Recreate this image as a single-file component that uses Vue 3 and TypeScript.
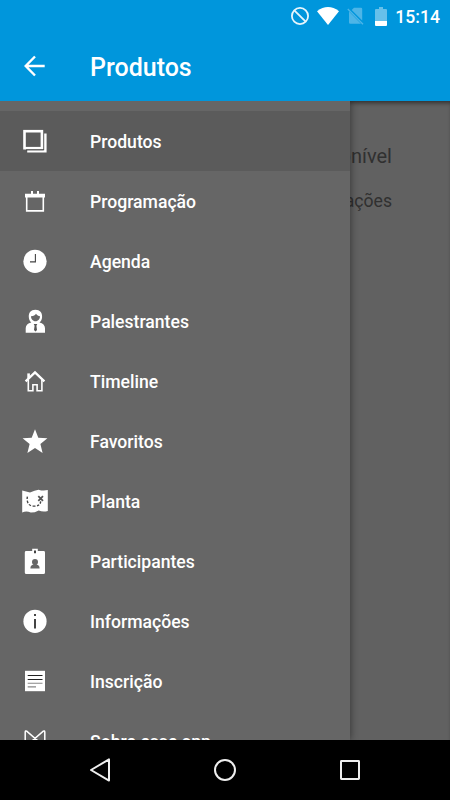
<script setup lang="ts">
import { ref } from 'vue'

interface Entry {
  id: string
  label: string
}

const entries: Entry[] = [
  { id: 'products', label: 'Produtos' },
  { id: 'schedule', label: 'Programação' },
  { id: 'agenda', label: 'Agenda' },
  { id: 'speakers', label: 'Palestrantes' },
  { id: 'timeline', label: 'Timeline' },
  { id: 'favorites', label: 'Favoritos' },
  { id: 'map', label: 'Planta' },
  { id: 'attendees', label: 'Participantes' },
  { id: 'info', label: 'Informações' },
  { id: 'signup', label: 'Inscrição' },
  { id: 'about', label: 'Sobre esse app' },
]
const active = ref('products')
</script>

<template>
  <div class="screen">
    <header class="top">
      <div class="status">
        <svg class="st-block" viewBox="0 0 20 20"><circle cx="10" cy="10" r="8.1" fill="none" stroke="#e6f5fc" stroke-width="1.8" /><path d="M4.3 4.3 15.7 15.7" stroke="#e6f5fc" stroke-width="1.8" /></svg>
        <svg class="st-wifi" viewBox="0 0 22 18"><path d="M0 4.2Q11-4 22 4.2L11 18Z" fill="#fff" /></svg>
        <svg class="st-sim" viewBox="0 0 17 18"><path d="M7 .8H14Q15.2 .8 15.2 2V13.6L4.7 3.1ZM2 4.6 14 16.8H3.2Q2 16.8 2 15.6Z" fill="#4db5e7" /><path d="M.8 2 16 17.2" stroke="#4db5e7" stroke-width="1.3" /></svg>
        <svg class="st-battery" viewBox="0 0 12 19"><path d="M4 0H8V2H11Q12 2 12 3V14H0V3Q0 2 1 2H4Z" fill="#66c0ea" /><path d="M0 14H12V18Q12 19 11 19H1Q0 19 0 18Z" fill="#fff" /></svg>
        <span class="clock">15:14</span>
      </div>
      <div class="toolbar">
        <svg class="back" viewBox="0 0 22 22"><path d="M20.7 11H2M11 1.5 1.7 11 11 20.5" fill="none" stroke="#fff" stroke-width="2.4" /></svg>
        <h1>Produtos</h1>
      </div>
    </header>

    <main class="body">
      <section class="content">
        <p class="headline">disponível</p>
        <p class="detail">informações</p>
      </section>
      <nav class="drawer">
        <a v-for="e in entries" :key="e.id" class="row" :class="{ active: e.id === active }" @click="active = e.id">
          <svg class="icon" viewBox="0 0 30 30">
            <g v-if="e.id === 'products'">
              <path d="M25.4 7.5V25.4H7.2" fill="none" stroke="#fff" stroke-width="2.4" />
              <rect x="4.5" y="5.2" width="17.4" height="17" fill="none" stroke="#fff" stroke-width="2.6" />
              <path d="M6 23.8H23.6" stroke="#222" stroke-width=".7" />
            </g>
            <g v-else-if="e.id === 'schedule'">
              <path d="M5 7.8H11V5H13V7.8H17V5H19V7.8H25V11.4H5Z" fill="#fff" />
              <path d="M6.7 10V24.9H23.3V10" fill="none" stroke="#fff" stroke-width="1.6" />
            </g>
            <g v-else-if="e.id === 'agenda'">
              <circle cx="15" cy="15.3" r="11.6" fill="#fff" />
              <path d="M15.4 8V15.9H10" fill="none" stroke="#444" stroke-width="1.1" />
            </g>
            <g v-else-if="e.id === 'speakers'">
              <path d="M15.4 3.8C10.8 3.8 8.6 6.8 8.8 11C8.9 13.6 9.9 15.4 11.3 16.6C7.8 17.5 5.7 19.3 5.7 22.3V26.7H25V22.3C25 19.3 22.9 17.5 19.5 16.6C21 15.2 22 13.4 22.1 11C22.3 6.8 20 3.8 15.4 3.8Z" fill="#fff" />
              <path d="M11 10.2C13.8 10 15 9.2 16 7.8C17 9.3 18.5 10 20 10.2C20 12.8 18.2 15.2 15.5 15.2C12.8 15.2 11 12.8 11 10.2Z" fill="#666" />
              <path d="M13.7 18H17.3L16.4 19.8L17 24L15.5 25.6L14 24L14.6 19.8Z" fill="#555" />
            </g>
            <g v-else-if="e.id === 'timeline'" fill="none" stroke="#fff">
              <path d="M5.6 15.3 15 6.4 24.4 15.3" stroke-width="2.3" />
              <path d="M8.3 14V24.7H12.9V18.8H17.1V24.7H21.9V14" stroke-width="1.6" />
              <path d="M8.6 7.4V12.3" stroke-width="2.6" />
            </g>
            <path v-else-if="e.id === 'favorites'" d="M15 3.2 18.3 11.7 27.4 12.2 20.4 18 22.6 27 15 22 7.4 27 9.6 18 2.6 12.2 11.7 11.7Z" fill="#fff" />
            <g v-else-if="e.id === 'map'">
              <path d="M2.2 4.4Q6 5.1 10 6.6Q14.8 4 18.6 3.7Q23 5.2 27.8 4.1V24.9Q23 26.3 18.7 24.4Q14.5 26.7 10.7 26.6Q6.5 24.5 2.2 26.5Z" fill="#fff" />
              <path d="M7.4 10.6C6.5 15 7.8 19.7 13 20.1C17.5 20.4 20.4 19 20.7 15.4" fill="none" stroke="#444" stroke-width="1.4" stroke-dasharray="2.5 1.6" />
              <path d="M18.3 10.2 23 14.8M23 10.2 18.3 14.8" stroke="#555" stroke-width="1.8" />
            </g>
            <g v-else-if="e.id === 'attendees'">
              <path d="M6.2 5H12.2V2.7H17.8V5H23.6Q25 5 25 6.4V26.5Q25 28 23.5 28H6.3Q4.8 28 4.8 26.5V6.4Q4.8 5 6.2 5Z" fill="#fff" />
              <path d="M14 4.5H16V7.3H14Z" fill="#444" />
              <circle cx="15" cy="16" r="3" fill="#666" />
              <path d="M13.5 17H16.5V18.6Q19.6 19.1 19.6 22.4H10.4Q10.4 19.1 13.5 18.6Z" fill="#666" />
            </g>
            <g v-else-if="e.id === 'info'">
              <circle cx="15" cy="15.3" r="11.6" fill="#fff" />
              <path d="M14 8H16V10H14ZM14 12.9H16V22.6H14Z" fill="#444" />
            </g>
            <g v-else-if="e.id === 'signup'">
              <path d="M5 4.8H25V25.2H5Z" fill="#fff" />
              <path d="M7.7 9.5H22.5M7.7 13.5H22.5" stroke="#222" stroke-width="1.1" />
              <path d="M7.7 17.3H22.5M7.7 20.9H16" stroke="#888" stroke-width="1.1" />
            </g>
            <path v-else d="M5.2 18V6Q5.4 4.4 6.7 5.2L19 15.8M24.8 18V6Q24.6 4.4 23.3 5.2L11 15.8" fill="none" stroke="#fff" stroke-width="1.5" />
          </svg>
          <span>{{ e.label }}</span>
        </a>
      </nav>
    </main>

    <footer class="navbar">
      <svg viewBox="0 0 26 26"><path d="M22 2.4V23.6L4 13Z" fill="none" stroke="#eee" stroke-width="2" stroke-linejoin="round" /></svg>
      <svg viewBox="0 0 26 26"><circle cx="13" cy="13" r="10" fill="none" stroke="#eee" stroke-width="2" /></svg>
      <svg viewBox="0 0 26 26"><rect x="4" y="4" width="18" height="18" rx=".4" fill="none" stroke="#eee" stroke-width="2" /></svg>
    </footer>
  </div>
</template>

<style>
body {
  margin: 0;
}
</style>

<style scoped>
.screen {
  width: 450px;
  height: 800px;
  display: flex;
  flex-direction: column;
  overflow: hidden;
  font-family: Roboto, sans-serif;
  background: #616161;
}
.top {
  height: 101px;
  flex: none;
  background: #0096dc;
  color: #fff;
}
.status {
  height: 32px;
  display: flex;
  align-items: center;
  justify-content: flex-end;
  padding-right: 10px;
}
.st-block { width: 20px; height: 20px; margin-right: 7px; }
.st-wifi { width: 22px; height: 18px; margin-right: 8px; }
.st-sim { width: 17px; height: 18px; margin-right: 11px; }
.st-battery { width: 12px; height: 19px; margin-right: 8px; }
.clock {
  font-size: 17.6px;
  font-weight: 500;
  line-height: 32px;
  padding-top: 1px;
}
.toolbar {
  height: 69px;
  display: flex;
  align-items: center;
  padding-left: 24px;
}
.back {
  width: 22px;
  height: 22px;
  margin-right: 44px;
  margin-bottom: 2px;
}
h1 {
  margin: 0;
  padding-top: 3px;
  font-size: 25px;
  font-weight: 500;
  line-height: 66px;
}
.body {
  flex: 1;
  min-height: 0;
  display: grid;
  overflow: hidden;
  box-shadow: inset 0 4px 4px -2px rgba(0, 0, 0, 0.5);
}
.content,
.drawer {
  grid-area: 1 / 1;
  min-height: 0;
}
.content {
  padding: 40px 58px 0 0;
  text-align: right;
  color: #303030;
  white-space: nowrap;
}
.content p {
  margin: 0;
}
.headline {
  font-size: 20px;
  line-height: 30px;
}
.detail {
  font-size: 17.6px;
  line-height: 30px;
  padding-top: 15px;
}
.drawer {
  width: 350px;
  box-sizing: border-box;
  padding-top: 10px;
  background: #666;
  box-shadow: 1px 0 7px rgba(0, 0, 0, 0.4);
  z-index: 1;
}
.row {
  height: 60px;
  display: flex;
  align-items: center;
  padding-left: 20px;
  color: #fff;
  font-size: 17.6px;
  font-weight: 500;
}
.row span {
  padding-top: 2px;
}
.row.active {
  background: #5b5b5b;
}
.icon {
  width: 30px;
  height: 30px;
  margin-right: 40px;
}
.navbar {
  height: 60px;
  flex: none;
  z-index: 2;
  background: #000;
  display: flex;
  align-items: center;
  justify-content: center;
  gap: 99px;
}
.navbar svg {
  width: 26px;
  height: 26px;
}
</style>
